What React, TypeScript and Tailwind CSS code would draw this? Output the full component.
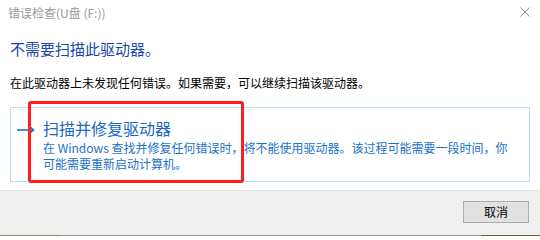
import React from "react";

export default function App() {
  const font = { fontFamily: '"Noto Sans CJK SC", "Noto Sans", sans-serif' };
  return (
    <div
      className="relative flex h-[236px] w-[540px] flex-col overflow-hidden bg-white"
      style={font}
    >
      {/* title bar */}
      <div className="flex h-[26px] items-center justify-between pl-[8px] pr-[10px]">
        <span className="text-[12px] leading-none text-[#9a9a9a]">错误检查(U盘 (F:))</span>
        <svg width="10" height="10" viewBox="0 0 10 10" className="mb-[2px]">
          <path d="M0.5 0.5 L9.5 9.5 M9.5 0.5 L0.5 9.5" stroke="#8c8c8c" strokeWidth="1" />
        </svg>
      </div>

      {/* content */}
      <div className="flex flex-1 flex-col px-[10px]">
        <div className="mt-[13px] text-[15px] leading-[20px] text-[#1a47a8]">不需要扫描此驱动器。</div>
        <div className="mt-[16px] text-[12px] leading-[16px] text-black">
          在此驱动器上未发现任何错误。如果需要，可以继续扫描该驱动器。
        </div>

        <div className="relative mt-[16px] flex h-[75px] w-[520px] border border-[#bfdcf3] pl-[6px] pt-[10px]">
          <svg width="18" height="10" viewBox="0 0 18 10" className="mt-[7px] shrink-0">
            <path d="M0 5 H16" stroke="#1a6fc8" strokeWidth="1.6" />
            <path d="M12 1 L16.5 5 L12 9" stroke="#1a6fc8" strokeWidth="1.6" fill="none" />
          </svg>
          <div className="ml-[8px] flex flex-col">
            <div className="text-[16px] leading-[21px] text-[#1669c4]">扫描并修复驱动器</div>
            <div className="mt-[1px] text-[12px] leading-[16px] text-[#1a72c9]">
              在 Windows 查找并修复任何错误时，将不能使用驱动器。该过程可能需要一段时间，你
              <br />
              可能需要重新启动计算机。
            </div>
          </div>
        </div>
      </div>

      {/* red annotation box */}
      <div className="absolute left-[28px] top-[101px] h-[82px] w-[216px] rounded-[3px] border-[3px] border-[#ff1f1f]" />

      {/* footer */}
      <div className="flex h-[45px] items-start justify-end border-t border-[#dfdfdf] bg-[#f0f0f0] pr-[11px] pt-[10px]">
        <button className="flex h-[22px] w-[66px] items-center justify-center border border-[#adadad] bg-[#e1e1e1] text-[12px] leading-none text-black">
          取消
        </button>
      </div>

      {/* desktop edge */}
      <div className="flex h-[1px] w-full">
        <div className="h-full w-[62px] bg-[#8f8d68]" />
        <div className="h-full flex-1 bg-[#9a9a9a]" />
        <div className="h-full w-[59px] bg-[#4d6b2c]" />
      </div>
    </div>
  );
}
